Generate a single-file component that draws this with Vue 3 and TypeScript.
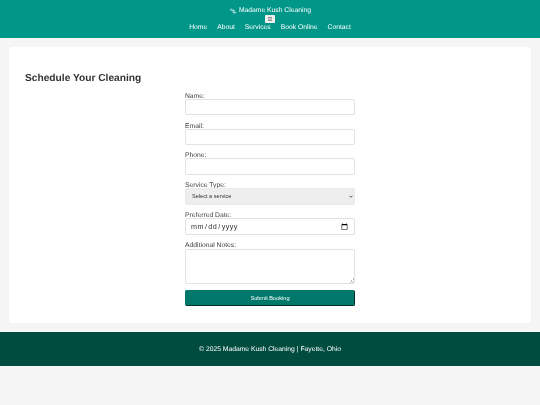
<script setup lang="ts">
const links: string[] = ['Home', 'About', 'Services', 'Book Online', 'Contact']
</script>

<template>
  <div class="page">
    <header class="top">
      <div class="brand">
        <svg class="logo" viewBox="0 0 8 6" width="8" height="6" aria-hidden="true">
          <circle cx="2.2" cy="1.8" r="1.3" fill="#7cc6c4" />
          <circle cx="4.4" cy="2.6" r="1.2" fill="#a8dcd8" />
          <path d="M3.6 4C4.8 3.2 6.6 3.2 7.6 4.2C6.8 5.8 4.8 6 3.6 5Z" fill="#8fd2ce" />
        </svg>
        <span>Madame Kush Cleaning</span>
      </div>
      <button class="burger" type="button" aria-label="Menu">☰</button>
      <nav class="nav">
        <a v-for="link in links" :key="link" href="#">{{ link }}</a>
      </nav>
    </header>

    <main class="card">
      <h2 class="heading">Schedule Your Cleaning</h2>
      <form class="form" @submit.prevent>
        <div class="field">
          <label for="name">Name:</label>
          <input id="name" type="text" />
        </div>
        <div class="field">
          <label for="email">Email:</label>
          <input id="email" type="email" />
        </div>
        <div class="field">
          <label for="phone">Phone:</label>
          <input id="phone" type="tel" />
        </div>
        <div class="field">
          <label for="service">Service Type:</label>
          <select id="service">
            <option>Select a service</option>
          </select>
        </div>
        <div class="field">
          <label for="date">Preferred Date:</label>
          <input id="date" type="date" />
        </div>
        <div class="field">
          <label for="notes">Additional Notes:</label>
          <textarea id="notes"></textarea>
        </div>
        <button class="submit" type="submit">Submit Booking</button>
      </form>
    </main>

    <footer class="foot">© 2025 Madame Kush Cleaning | Fayette, Ohio</footer>
  </div>
</template>

<style>
html,
body {
  margin: 0;
  background: #f5f5f5;
}
</style>

<style scoped>
.page {
  min-height: 405px;
  background: #f5f5f5;
  font-family: "Liberation Sans", Arial, sans-serif;
  color: #444;
  text-rendering: geometricPrecision;
  filter: blur(0.3px);
}
.top {
  height: 38px;
  box-sizing: border-box;
  background: #009688;
  color: #fff;
  padding-top: 6px;
  display: flex;
  flex-direction: column;
  align-items: center;
}
.brand {
  height: 9px;
  display: flex;
  align-items: center;
  gap: 2px;
  font-size: 6.75px;
  line-height: 9px;
}
.logo {
  display: block;
}
.burger {
  width: 10px;
  height: 8px;
  margin: 0;
  padding: 0;
  border: 0;
  border-radius: 1px;
  background: #efefef;
  color: #333;
  font-size: 5.5px;
  line-height: 8px;
  font-family: "DejaVu Sans", sans-serif;
}
.nav {
  display: flex;
  justify-content: center;
  gap: 10px;
  height: 10px;
  margin-top: -1px;
  padding-top: 1.2px;
}
.nav a {
  color: #fff;
  text-decoration: none;
  font-size: 6.75px;
  line-height: 10px;
}
.card {
  margin: 9px;
  height: 276px;
  box-sizing: border-box;
  padding: 24.7px 16px 0;
  background: #fff;
  border-radius: 3px;
}
.heading {
  margin: 0;
  font-size: 10.2px;
  line-height: 13px;
  font-weight: 700;
  color: #333;
}
.form {
  width: 170px;
  margin: 5.6px auto 0;
  display: flex;
  flex-direction: column;
  gap: 4.4px;
}
.field {
  display: flex;
  flex-direction: column;
}
.field label {
  font-size: 6.75px;
  line-height: 13.7px;
  height: 8.7px;
  color: #444;
}
input,
select,
textarea {
  display: block;
  width: 170px;
  box-sizing: border-box;
  margin: 0;
  border: 1px solid #e2e2e2;
  border-radius: 2px;
  background: #fff;
  font-family: "Liberation Sans", Arial, sans-serif;
  font-size: 5.6px;
  outline: none;
}
input {
  height: 16.5px;
  padding: 2px 3px;
}
input[type="date"] {
  height: 17px;
  font-size: 7.2px;
  letter-spacing: 0.45px;
  color: #333;
  padding: 2px 4px;
}
select {
  height: 17px;
  appearance: none;
  background: #eee url("data:image/svg+xml,%3Csvg xmlns='http://www.w3.org/2000/svg' viewBox='0 0 8 6'%3E%3Cpath d='M1 1.5 4 4.5 7 1.5' fill='none' stroke='%23333' stroke-width='1.6'/%3E%3C/svg%3E") no-repeat right 1.5px center / 4px 3px;
  border-color: #eaeaea;
  color: #333;
  padding: 0 6px;
}
textarea {
  height: 35.5px;
  margin-top: 1px;
  padding: 2px 3px;
}
textarea::-webkit-resizer {
  background: linear-gradient(135deg, transparent 50%, #bbb 50%, #bbb 60%, transparent 60%, transparent 72%, #bbb 72%, #bbb 82%, transparent 82%) no-repeat right 0.5px bottom 0.5px / 5px 5px;
}
.submit {
  display: block;
  width: 170px;
  height: 16.5px;
  margin-top: 0.8px;
  padding: 0;
  box-sizing: border-box;
  border: 1px solid #002f27;
  border-top-color: #00796b;
  border-left-color: #00796b;
  border-radius: 2px;
  background: #00796b;
  color: #fff;
  font-family: "Liberation Sans", Arial, sans-serif;
  font-size: 5.6px;
}
.foot {
  height: 34px;
  box-sizing: border-box;
  background: #004d40;
  color: #fff;
  font-size: 6.75px;
  line-height: 35.5px;
  text-align: center;
}
</style>
